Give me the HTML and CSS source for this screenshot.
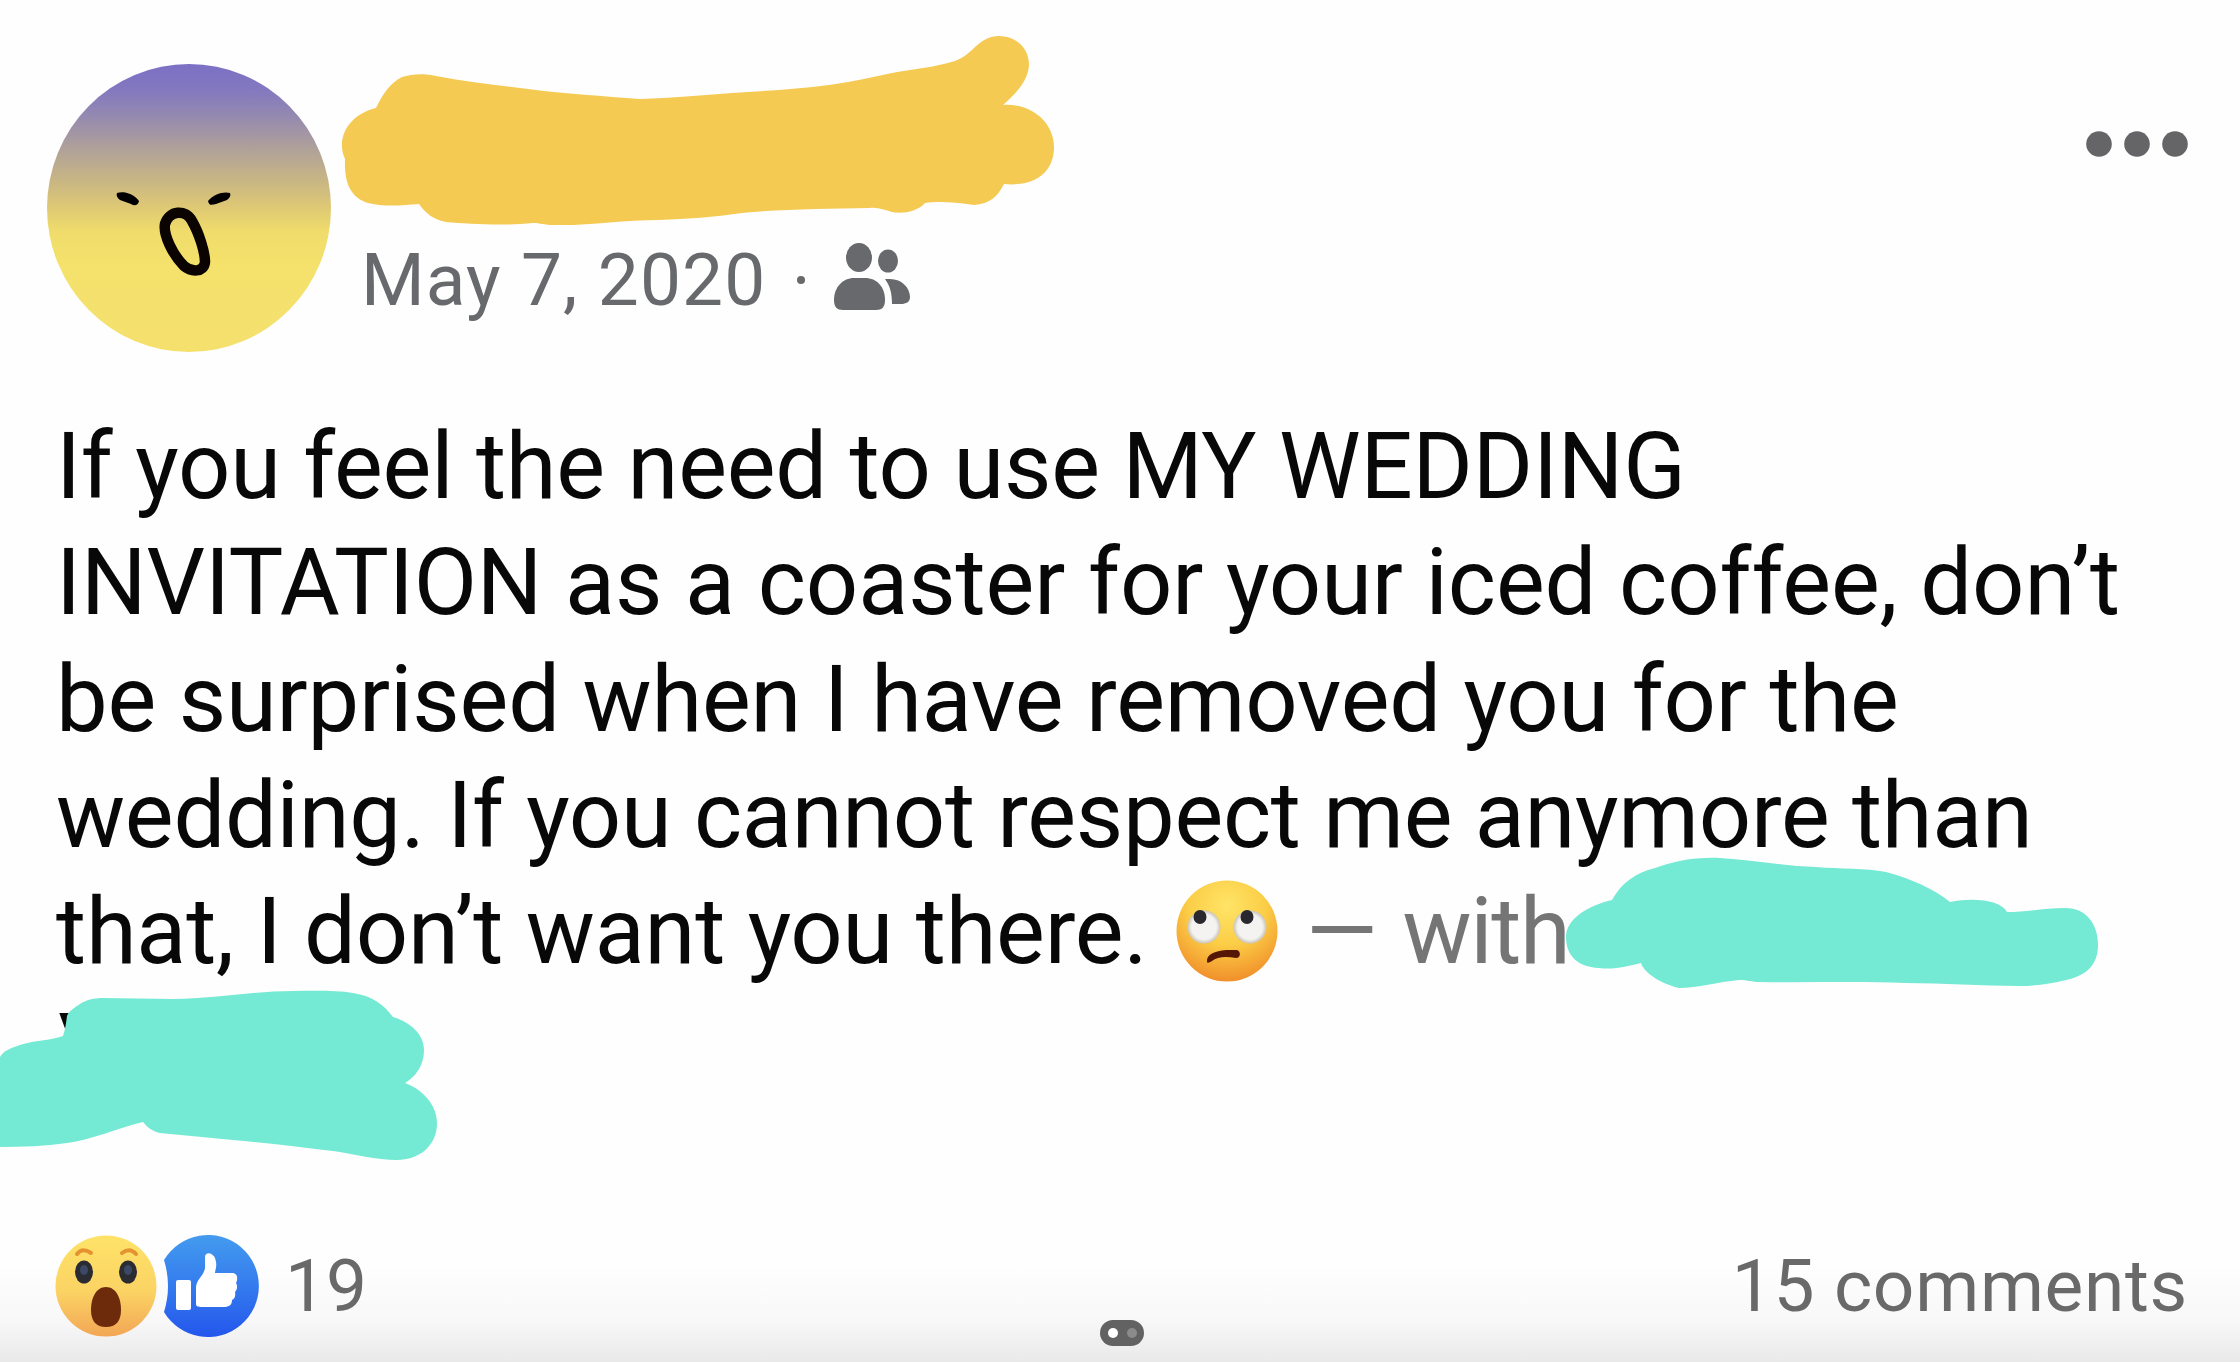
FILE: index.html
```html
<!DOCTYPE html>
<html lang="en">
<head>
    <meta charset="UTF-8">
    <title>Post</title>
    <link rel="stylesheet" href="styles.css">
</head>
<body>
    <article class="post">
        <header class="post-header">
            <svg class="avatar" viewBox="0 0 284 288">
                <defs>
                    <linearGradient id="avatarFill" x1="0" y1="0" x2="0" y2="1">
                        <stop offset="0" stop-color="#7c70c4"></stop>
                        <stop offset="0.08" stop-color="#8277c0"></stop>
                        <stop offset="0.18" stop-color="#9489b0"></stop>
                        <stop offset="0.3" stop-color="#b1a298"></stop>
                        <stop offset="0.41" stop-color="#c9b783"></stop>
                        <stop offset="0.5" stop-color="#dfc974"></stop>
                        <stop offset="0.58" stop-color="#efdc6b"></stop>
                        <stop offset="0.7" stop-color="#f4e26c"></stop>
                        <stop offset="1" stop-color="#f5e06e"></stop>
                    </linearGradient>
                </defs>
                <ellipse cx="142" cy="144" rx="142" ry="144" fill="url(#avatarFill)"></ellipse>
                <path d="M70 129C76 127 86 129 92 137C91 142 87 142 84 140L73 136C70 134 69 131 70 129Z"></path>
                <path d="M183 129C177 127 166 130 161 137C162 142 165 141 169 140L180 136C183 134 184 131 183 129Z"></path>
                <path d="M118 160C122 146 139 145 145 157C152 169 158 188 158 198C157 209 144 208 137 202C126 191 116 171 118 160Z" fill="none" stroke="#0b0300" stroke-width="10.5"></path>
            </svg>
            <div class="post-meta">
                <span class="post-date">May 7, 2020</span>
                <span class="separator"></span>
                <svg class="friends-icon" viewBox="0 0 76 68">
                    <ellipse cx="25" cy="14.5" rx="13" ry="14.5"></ellipse>
                    <ellipse cx="54" cy="18" rx="10" ry="11.5"></ellipse>
                    <path d="M0 57C0 44 9 35 20 35H31C43 35 51 44 51 57C51 64 48 67 42 67H9C3 67 0 64 0 57Z"></path>
                    <path d="M51 36H56C68 36 76 45 76 54C76 59 72 61 67 61H58C58 50 56 43 51 36Z"></path>
                </svg>
            </div>
            <svg class="more-icon" viewBox="0 0 102 26">
                <circle cx="13" cy="13" r="12.8"></circle>
                <circle cx="51" cy="13" r="12.8"></circle>
                <circle cx="89" cy="13" r="12.8"></circle>
            </svg>
        </header>

        <p class="post-text">
            <span class="line line-1">If you feel the need to use MY WEDDING</span>
            <span class="line line-2">INVITATION as a coaster for your iced coffee, don’t</span>
            <span class="line line-3">be surprised when I have removed you for the</span>
            <span class="line line-4">wedding. If you cannot respect me anymore than</span>
            <span class="line line-5">that, I don’t want you there.
                <svg class="emoji" viewBox="0 0 102 102">
                    <defs>
                        <radialGradient id="emojiFill" cx="0.5" cy="0.25" r="0.78">
                            <stop offset="0" stop-color="#ffe467"></stop>
                            <stop offset="0.5" stop-color="#fbcd46"></stop>
                            <stop offset="1" stop-color="#f08a28"></stop>
                        </radialGradient>
                        <radialGradient id="eyeFill">
                            <stop offset="0.75" stop-color="#f4f3f1"></stop>
                            <stop offset="1" stop-color="#c9c4b8"></stop>
                        </radialGradient>
                    </defs>
                    <circle cx="51" cy="51" r="50.5" fill="url(#emojiFill)"></circle>
                    <circle cx="28" cy="47" r="16.5" fill="url(#eyeFill)"></circle>
                    <circle cx="74" cy="47" r="16.5" fill="url(#eyeFill)"></circle>
                    <ellipse cx="24" cy="37" rx="6.5" ry="7" fill="#29282e"></ellipse>
                    <ellipse cx="71" cy="37" rx="6.5" ry="7" fill="#29282e"></ellipse>
                    <path d="M31 82C30 74 39 71 50 70H61C65 71 65 78 60 78C49 76 41 77 36 81C33 83 31 83 31 82Z" fill="#551706"></path>
                </svg>
                <span class="with">— with</span></span>
            <span class="line line-6">V</span>
        </p>

        <footer class="post-footer">
            <div class="reactions">
                <svg class="reaction-icons" viewBox="0 0 206 104">
                    <defs>
                        <linearGradient id="wowFill" x1="0" y1="0" x2="0" y2="1">
                            <stop offset="0" stop-color="#fee368"></stop>
                            <stop offset="0.55" stop-color="#fbd364"></stop>
                            <stop offset="1" stop-color="#f2a655"></stop>
                        </linearGradient>
                        <linearGradient id="likeFill" x1="0" y1="0" x2="0" y2="1">
                            <stop offset="0" stop-color="#449bee"></stop>
                            <stop offset="0.5" stop-color="#347bee"></stop>
                            <stop offset="1" stop-color="#2456ec"></stop>
                        </linearGradient>
                    </defs>
                    <circle cx="52" cy="52" r="50.5" fill="url(#wowFill)"></circle>
                    <path d="M23 20Q28 13 37 19M68 19Q76 13 82 20" fill="none" stroke="#e49330" stroke-width="4" stroke-linecap="round"></path>
                    <ellipse cx="30" cy="38" rx="9" ry="11.5" fill="#2a2c31"></ellipse>
                    <ellipse cx="74" cy="38" rx="9" ry="11.5" fill="#2a2c31"></ellipse>
                    <ellipse cx="30" cy="36" rx="4" ry="5" fill="#3b4866"></ellipse>
                    <ellipse cx="74" cy="36" rx="4" ry="5" fill="#3b4866"></ellipse>
                    <path d="M52 53C62 53 67 64 67 76C67 87 62 93 52 93C42 93 37 87 37 76C37 64 42 53 52 53Z" fill="#6d2b0c"></path>
                    <path d="M110 26A51 51 0 1 1 110 78Q118 52 110 26Z" fill="url(#likeFill)"></path>
                    <rect x="122" y="46" width="15" height="30" rx="2" fill="#fff"></rect>
                    <path d="M142 70V54C142 45 150 42 151 34V23C151 17 161 18 162 28C163 33 161 36 161 39H178C184 39 184 45 182 49C184 52 183 56 181 58C182 63 180 65 178 66C178 71 175 73 170 73H150C145 73 142 73 142 70Z" fill="#fff"></path>
                </svg>
                <span class="reaction-count">19</span>
            </div>
            <span class="comment-count">15 comments</span>
        </footer>

        <!-- marker strokes hiding the names -->
        <svg class="scribbles" viewBox="0 0 2240 1362">
            <path class="marker-yellow" d="M376 108C382 95 391 82 402 77C411 74 424 73 436 76C466 82 497 85 528 89C565 94 604 96 640 99C671 98 702 95 732 93C765 91 798 89 829 85C851 82 872 77 892 73C914 69 936 67 955 61C963 58 967 54 972 50C980 42 988 36 999 36C1015 36 1029 47 1029 65C1028 82 1015 94 1003 105C1032 103 1054 123 1054 147C1054 173 1034 187 1004 184C998 196 990 204 974 205C955 202 937 201 925 203C917 212 902 214 892 212C884 210 878 207 870 208C826 209 782 209 742 213C714 217 687 219 659 220C623 220 588 226 553 225C545 225 540 223 533 223C504 226 469 224 446 222C434 220 425 213 419 204C405 205 388 207 373 204C350 200 344 182 345 159C335 137 350 114 376 108Z"></path>
            <path class="marker-teal" d="M1612 900C1622 882 1636 873 1655 868C1675 861 1694 857 1720 858C1753 860 1785 866 1816 867C1840 869 1866 868 1886 872C1912 879 1934 889 1950 902C1976 897 2001 901 2007 912C2026 912 2045 908 2065 908C2088 908 2098 926 2098 945C2098 966 2085 976 2066 980C2051 984 2035 986 2020 986C1981 986 1943 983 1905 983C1856 981 1808 983 1759 982C1752 982 1748 980 1739 980C1717 982 1698 988 1679 988C1669 986 1645 976 1641 963C1628 966 1614 970 1599 968C1577 967 1566 955 1566 937C1566 918 1590 905 1612 900Z"></path>
            <path class="marker-teal" d="M0 1057C3 1051 11 1048 20 1045C34 1040 50 1041 63 1036C65 1030 66 1024 67 1016C69 1011 74 1008 80 1004C86 1000 94 998 103 998C126 998 149 999 173 999C213 999 253 991 293 991C313 991 334 990 353 993C373 996 384 1005 393 1017C410 1022 424 1034 424 1050C424 1066 415 1077 405 1083C424 1090 437 1106 437 1123C437 1146 419 1160 397 1160C376 1160 355 1154 333 1151C300 1147 267 1143 233 1140C209 1138 184 1135 160 1133C152 1131 147 1127 143 1122C117 1128 92 1140 67 1143C45 1146 22 1147 0 1147Z"></path>
        </svg>

        <div class="pager">
            <span class="pager-dot active"></span>
            <span class="pager-dot"></span>
        </div>
    </article>
</body>
</html>
```
FILE: styles.css
```css
:root {
    --text-color: #080808;
    --text-secondary: #68696c;
    --marker-yellow: #f5ca53;
    --marker-teal: #74e9d3;
}

* {
    box-sizing: border-box;
}

body {
    margin: 0;
    font-family: Roboto, sans-serif;
    color: var(--text-color);
    background: #fefefe;
}

.post {
    position: relative;
    width: 2240px;
    height: 1362px;
    overflow: hidden;
    padding: 64px 52px 0 56px;
    display: flex;
    flex-direction: column;
    background: linear-gradient(to bottom, #fefefe 1265px, #f8f8f8 1320px, #e9e9e9 1362px);
}

.post-header {
    display: flex;
    height: 345px;
    margin-left: -9px;
}

.avatar {
    width: 284px;
    height: 288px;
}

.post-meta {
    display: flex;
    align-items: center;
    height: 86px;
    margin: 173px 0 0 30px;
    font-size: 73px;
    line-height: 86px;
    color: var(--text-secondary);
    white-space: nowrap;
}

.post-date {
    width: 434px;
    letter-spacing: 1.1px;
}

.separator {
    width: 8px;
    height: 8px;
    margin-left: 2px;
    border-radius: 50%;
    background: currentColor;
}

.friends-icon {
    width: 76px;
    height: 68px;
    margin: 0 0 6px 29px;
    fill: var(--text-secondary);
}

.more-icon {
    width: 102px;
    height: 26px;
    margin: 67px 0 0 auto;
    fill: #656568;
}

.post-text {
    margin: 0;
    font-size: 92px;
    line-height: 116.3px;
    height: 825px;
}

.line {
    display: block;
    height: 116.3px;
    white-space: nowrap;
}

.line-1 {
    letter-spacing: -0.2px;
}

.line-2 {
    letter-spacing: -0.1px;
}

.line-3 {
    letter-spacing: -0.18px;
}

.line-4 {
    letter-spacing: -0.27px;
}

.line-5 {
    letter-spacing: -0.2px;
}

.line-6 {
    padding-left: 2px;
}

.emoji {
    width: 102px;
    height: 102px;
    margin: 0 5px 0 6px;
    vertical-align: -19px;
}

.with {
    color: #757575;
    letter-spacing: -1.4px;
    word-spacing: 5px;
}

.post-footer {
    display: flex;
    justify-content: space-between;
    align-items: center;
    height: 104px;
    font-size: 73px;
    line-height: 86px;
    color: #696969;
}

.reactions {
    display: flex;
    align-items: center;
    margin-left: -2px;
}

.reaction-icons {
    width: 206px;
    height: 104px;
}

.reaction-count {
    margin-left: 25px;
}

.comment-count {
    letter-spacing: 0.7px;
}

.scribbles {
    position: absolute;
    top: 0;
    left: 0;
    width: 2240px;
    height: 1362px;
}

.marker-yellow {
    fill: var(--marker-yellow);
}

.marker-teal {
    fill: var(--marker-teal);
}

.pager {
    position: absolute;
    left: 1100px;
    top: 1320px;
    width: 44px;
    height: 26px;
    display: flex;
    align-items: center;
    justify-content: center;
    gap: 9px;
    border-radius: 13px;
    background: #626262;
}

.pager-dot {
    width: 10px;
    height: 10px;
    border-radius: 50%;
    background: #8b8b8b;
}

.pager-dot.active {
    background: #fff;
}
```
